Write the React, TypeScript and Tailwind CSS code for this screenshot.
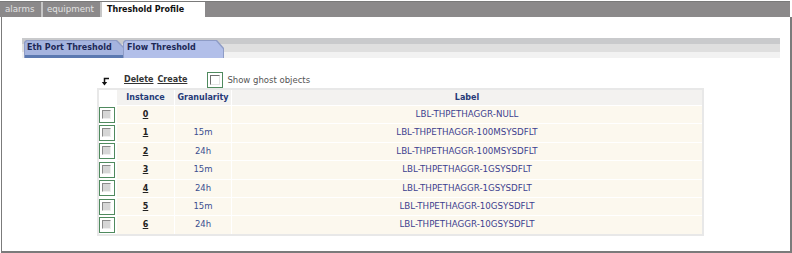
import React from 'react';

const rows = [
  { id: '0', gran: '', label: 'LBL-THPETHAGGR-NULL' },
  { id: '1', gran: '15m', label: 'LBL-THPETHAGGR-100MSYSDFLT' },
  { id: '2', gran: '24h', label: 'LBL-THPETHAGGR-100MSYSDFLT' },
  { id: '3', gran: '15m', label: 'LBL-THPETHAGGR-1GSYSDFLT' },
  { id: '4', gran: '24h', label: 'LBL-THPETHAGGR-1GSYSDFLT' },
  { id: '5', gran: '15m', label: 'LBL-THPETHAGGR-10GSYSDFLT' },
  { id: '6', gran: '24h', label: 'LBL-THPETHAGGR-10GSYSDFLT' },
];

function RowCheck() {
  return (
    <div className="w-[16px] h-[16px] border-[1.5px] border-[#4f8a5e] bg-white flex items-start justify-start pl-[2px] pt-[2px]">
      <div className="w-[9px] h-[9px] bg-[#d6d6d6] border-t border-l border-[#8a8a8a] border-b border-r border-b-[#efefef] border-r-[#efefef]" />
    </div>
  );
}

function GhostCheck() {
  return (
    <div className="w-[16px] h-[16px] border-[1.5px] border-[#4f8a5e] bg-white pl-[2px] pt-[2px]">
      <div className="w-[10px] h-[10px] bg-white border-t border-l border-[#6e6e6e] border-b border-r border-b-[#e4e4e4] border-r-[#e4e4e4]" />
    </div>
  );
}

export default function App() {
  return (
    <div className="w-[792px] h-[253px] bg-white font-['DejaVu_Sans',Verdana,sans-serif] overflow-hidden">
      {/* top tabs */}
      <div className="mt-px w-[790px] h-[16px] bg-[#8b898a] border-t border-[#7a7a7a] flex text-[8.7px] leading-[15px]">
        <div className="w-[41px] pl-[5px] text-[#e2e2e2]">alarms</div>
        <div className="w-[2px] bg-[#c6c6c6]" />
        <div className="w-[57px] pl-[4px] text-[#e2e2e2]">equipment</div>
        <div className="w-[2px] bg-[#c6c6c6]" />
        <div className="w-[103px] pl-[5px] bg-white text-[#111] font-bold text-[8px]">Threshold Profile</div>
      </div>

      {/* frame */}
      <div className="ml-px w-[791px] h-[236px] border-l border-r-2 border-b-2 border-[#7b7b7b] pt-[21px]">
        {/* sub tabs */}
        <div className="ml-[20px] w-[758px] h-[20px] pt-[2px] pl-[2px] flex bg-[linear-gradient(#c9cacc_0_6px,#dfdfdf_6px_14px,#f2f2f2_14px)]">
          <div className="w-[100px] h-[18px] bg-[#8e9cc6] [clip-path:polygon(0_2px,2px_0,calc(100%_-_7px)_0,100%_7px,100%_100%,0_100%)]">
            <div className="h-full mx-px mt-px bg-[#a5b4df] [clip-path:polygon(0_2px,2px_0,calc(100%_-_7px)_0,100%_7px,100%_100%,0_100%)] flex flex-col">
              <div className="flex-1 pl-[2px] text-[8px] font-bold text-[#1d2856] leading-[13px]">Eth Port Threshold</div>
              <div className="h-[4px] bg-[#5b79b1]" />
            </div>
          </div>
          <div className="-ml-[1px] w-[101px] h-[18px] bg-[#8e9cc6] [clip-path:polygon(0_2px,2px_0,calc(100%_-_7px)_0,100%_8px,100%_100%,0_100%)]">
            <div className="h-full mx-px mt-px bg-[#b2bfe9] [clip-path:polygon(0_2px,2px_0,calc(100%_-_7px)_0,100%_8px,100%_100%,0_100%)] pl-[3px] text-[8px] font-bold text-[#1d2856] leading-[13px]">
              Flow Threshold
            </div>
          </div>
        </div>

        {/* actions */}
        <div className="mt-[14px] ml-[97px] h-[16px] flex items-center">
          <svg width="9" height="9" viewBox="0 0 9 9" className="ml-[2px] mt-[2px]">
            <path d="M8 1.5H3.5V5.5" stroke="#111" strokeWidth="1.5" fill="none" />
            <path d="M0.8 5L6.2 5L3.5 8.6Z" fill="#111" />
          </svg>
          <span className="ml-[14px] text-[8px] font-bold text-[#333] underline underline-offset-[1px]">Delete</span>
          <span className="ml-[4px] text-[8px] font-bold text-[#333] underline underline-offset-[1px]">Create</span>
          <div className="ml-[20px]">
            <GhostCheck />
          </div>
          <span className="ml-[4px] text-[8.5px] text-[#555]">Show ghost objects</span>
        </div>

        {/* table */}
        <div className="ml-[95px] w-[607px] border-2 border-[#e8e8e8] bg-white">
          <div className="grid grid-cols-[17px_57px_56px_1fr] gap-px auto-rows-[17.4px] [grid-template-rows:15px]">
            <div className="bg-white" />
            <div className="bg-[#f3f2f0] text-center text-[8px] font-bold text-[#263a78] leading-[15px]">Instance</div>
            <div className="bg-[#f3f2f0] text-center text-[8px] font-bold text-[#263a78] leading-[15px]">Granularity</div>
            <div className="bg-[#f3f2f0] text-center text-[8px] font-bold text-[#263a78] leading-[15px]">Label</div>
            {rows.map((r) => (
              <React.Fragment key={r.id}>
                <div className="bg-white flex items-center">
                  <RowCheck />
                </div>
                <div className="bg-[#fcf8ee] text-center text-[8px] font-bold text-[#222] underline underline-offset-[1px] leading-[17px]">
                  {r.id}
                </div>
                <div className="bg-[#fcf8ee] text-center text-[8.5px] text-[#3b4e8e] leading-[17px]">{r.gran}</div>
                <div className="bg-[#fcf8ee] text-center text-[8.7px] text-[#3c3f8e] leading-[17px]">{r.label}</div>
              </React.Fragment>
            ))}
          </div>
        </div>
      </div>
    </div>
  );
}
